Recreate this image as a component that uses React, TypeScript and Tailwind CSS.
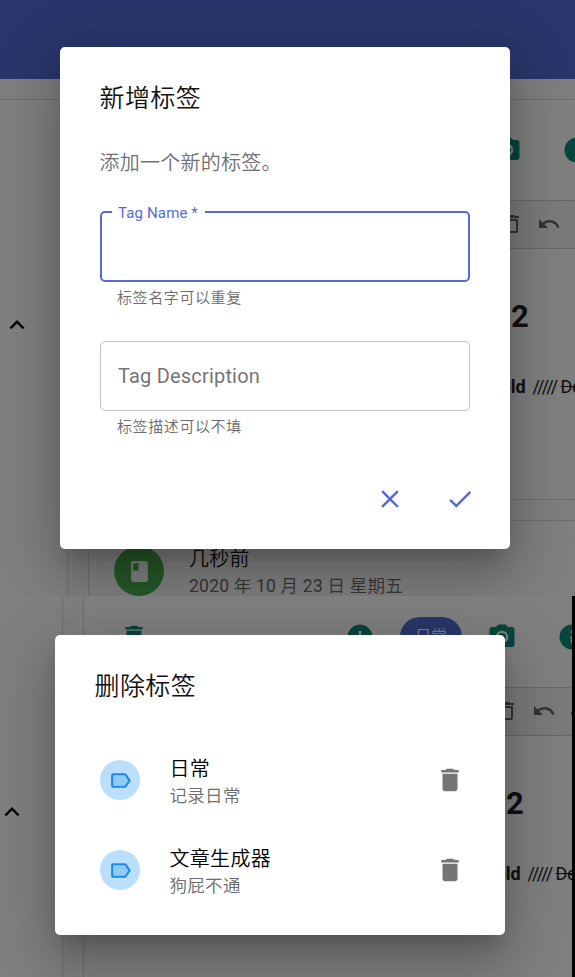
import React from 'react';
import {
  MdAddCircle,
  MdBook,
  MdCheck,
  MdClose,
  MdDelete,
  MdDeleteOutline,
  MdExpandLess,
  MdInfo,
  MdPhotoCamera,
  MdRedo,
  MdUndo,
} from 'react-icons/md';

const dialogShadow =
  'shadow-[0_14px_19px_-9px_rgba(0,0,0,0.2),0_30px_48px_4px_rgba(0,0,0,0.14),0_11px_58px_10px_rgba(0,0,0,0.12)]';

function Editor() {
  return (
    <div className="h-[401px] border border-r-0 border-[#dcdcdc] bg-white">
      <div className="flex h-[100px] items-center text-[30px] text-[#0f8a7a]">
        <MdDelete className="ml-[35px] shrink-0" />
        <MdAddCircle className="ml-[196px] shrink-0" />
        <div className="ml-[25px] flex h-10 w-[62px] shrink-0 items-center justify-center rounded-full bg-[#556cd6] text-[16px] font-[350] text-white">
          日常
        </div>
        <MdPhotoCamera className="ml-[25px] shrink-0" />
        <MdInfo className="ml-10 shrink-0" />
      </div>
      <div className="flex h-[49px] items-center border-y border-[#d0d0d0] bg-[#f5f5f5] pb-[2px] pl-[411px] text-[24px] text-[#666]">
        <MdDeleteOutline className="shrink-0" />
        <MdUndo className="ml-[13px] shrink-0" />
        <MdRedo className="ml-[13px] shrink-0" />
      </div>
      <div className="pt-[45px] text-[#222]">
        <div className="pl-[422px] text-[31px] font-bold leading-[46px]">2</div>
        <div className="flex items-center whitespace-nowrap pl-[400px] pt-[34px] text-[18px] leading-[26px]">
          <b>Bold</b>
          <span className="ml-[7px] w-[25px] tracking-[-0.9px]">/////</span>
          <s className="ml-[3px] tracking-[-0.3px]">De</s>
        </div>
      </div>
    </div>
  );
}

function JournalPage() {
  return (
    <div className="w-[640px]">
      <div className="h-[79px] bg-[#556cd6]" />
      <div className="flex h-[560px] bg-[#fdfdfd]">
        <div className="mt-5 w-[68px] shrink-0 border-r border-t border-[#dcdcdc] bg-white pl-[2px] pt-[210px] text-[30px] text-[#111]">
          <MdExpandLess />
        </div>
        <div className="ml-5 mt-5 w-[560px]">
          <Editor />
          <div className="mt-5 h-[200px] border border-r-0 border-[#dcdcdc] bg-white pl-[25px] pt-[22px]">
            <div className="flex items-start gap-[25px]">
              <div className="mt-[3px] flex size-[50px] items-center justify-center rounded-full bg-[#4caf50] text-[25px] text-white">
                <MdBook />
              </div>
              <div className="mt-px font-[350]">
                <div className="text-[20px] leading-[30px] tracking-[0.19px] text-[#111]">几秒前</div>
                <div className="text-[17.5px] leading-[25px] tracking-[0.23px] text-[#6c6c6c]">
                  <span className="font-normal">2020</span> 年 <span className="font-normal">10</span> 月{' '}
                  <span className="font-normal">23</span> 日 星期五
                </div>
              </div>
            </div>
          </div>
        </div>
      </div>
    </div>
  );
}

function AddTagDialog() {
  return (
    <div className={`absolute left-[60px] top-[47px] h-[502px] w-[450px] rounded-[5px] bg-white px-10 pt-8 ${dialogShadow}`}>
      <h2 className="-ml-[0.5px] text-[25px] font-[350] leading-10 tracking-[0.4px] text-[#111]">新增标签</h2>
      <p className="-ml-[0.5px] mt-[29px] text-[20px] font-[350] leading-[30px] tracking-[0.25px] text-[#707070]">添加一个新的标签。</p>
      <div className="relative mt-[33px] h-[71px] rounded-[5px] border-2 border-[#556cd6]">
        <label className="absolute left-[10px] top-[-9px] bg-white pl-[6px] pr-[7px] text-[15px] leading-[18px] tracking-[0.14px] text-[#556cd6]">
          Tag Name *
        </label>
      </div>
      <p className="ml-[17px] mt-[4px] text-[15px] font-[350] leading-[25px] tracking-[0.6px] text-[#6c6c6c]">标签名字可以重复</p>
      <div className="mt-[30px] flex h-[70px] items-center rounded-[5px] border border-[#c4c4c4] pl-[17px] text-[20px] tracking-[0.19px] text-[#757575]">
        Tag Description
      </div>
      <p className="ml-[17px] mt-[4px] text-[15px] font-[350] leading-[25px] tracking-[0.6px] text-[#6c6c6c]">标签描述可以不填</p>
      <div className="mr-[-5px] mt-[44px] flex justify-end gap-10 text-[30px] text-[#556cd6]">
        <MdClose />
        <MdCheck />
      </div>
    </div>
  );
}

function TagIcon() {
  return (
    <svg viewBox="0 0 24 24" className="size-[25px]">
      <path d="M16 7H5v10h11l3.55-5z" fill="#90caf9" />
      <path
        d="M17.63 5.84C17.27 5.33 16.67 5 16 5L5 5.01C3.9 5.01 3 5.9 3 7v10c0 1.1.9 1.99 2 1.99L16 19c.67 0 1.27-.33 1.63-.84L22 12l-4.37-6.16zM16 17H5V7h11l3.55 5L16 17z"
        fill="#1e88e5"
      />
    </svg>
  );
}

function TagRow({ name, note }: { name: string; note: string }) {
  return (
    <div className="flex h-[90px] items-center">
      <div className="flex size-10 items-center justify-center rounded-full bg-[#bbdefb]">
        <TagIcon />
      </div>
      <div className="ml-[29.5px] mt-[2px] flex-1 font-[350]">
        <div className="text-[20px] leading-[30px] tracking-[0.3px] text-[#000]">{name}</div>
        <div className="text-[17.5px] leading-[25px] tracking-[0.3px] text-[#6c6c6c]">{note}</div>
      </div>
      <MdDelete className="text-[30px] text-[#757575]" />
    </div>
  );
}

function DeleteTagDialog() {
  return (
    <div className={`absolute left-[55px] top-[39px] h-[300px] w-[450px] rounded-[5px] bg-white pt-8 ${dialogShadow}`}>
      <h2 className="pl-[39.5px] text-[25px] font-[350] leading-10 tracking-[0.4px] text-[#111]">删除标签</h2>
      <div className="mt-7 pl-[45px] pr-10">
        <TagRow name="日常" note="记录日常" />
        <TagRow name="文章生成器" note="狗屁不通" />
      </div>
    </div>
  );
}

export default function App() {
  return (
    <div
      lang="zh-CN"
      className="h-[977px] w-[575px] overflow-hidden bg-black font-['Roboto','Noto_Sans_CJK_SC',sans-serif]"
    >
      <section className="relative h-[596px] overflow-hidden">
        <JournalPage />
        <div className="absolute inset-0 bg-black/50" />
        <AddTagDialog />
      </section>
      <section className="relative h-[381px] w-[572px] overflow-hidden">
        <div className="-ml-[5px] -mt-[109px]">
          <JournalPage />
        </div>
        <div className="absolute inset-0 bg-black/50" />
        <DeleteTagDialog />
      </section>
    </div>
  );
}
